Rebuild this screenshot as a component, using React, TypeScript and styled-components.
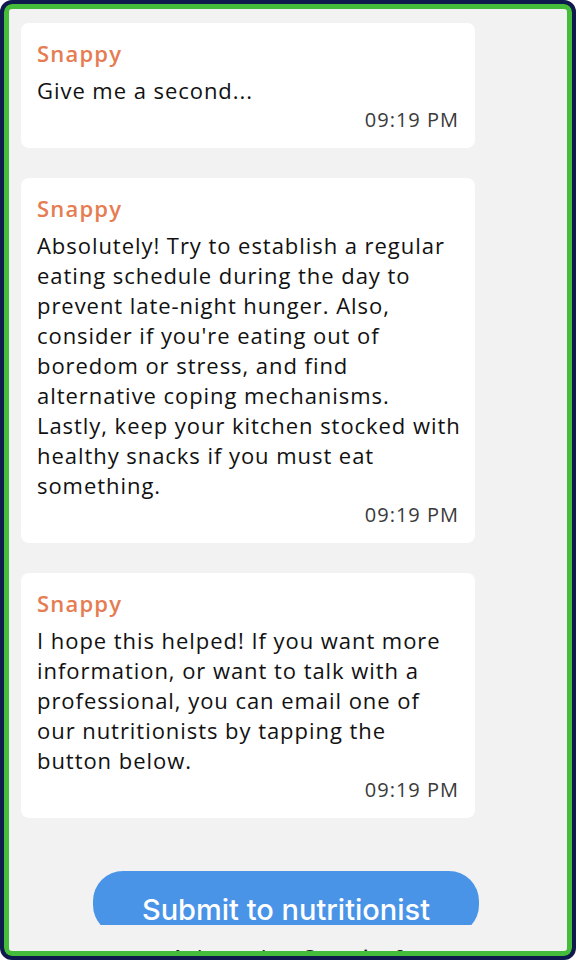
import React from 'react'
import styled, { createGlobalStyle } from 'styled-components'

const GlobalStyle = createGlobalStyle`
  html, body {
    margin: 0;
    padding: 0;
    background: #ffffff;
  }
  * {
    box-sizing: border-box;
  }
`

const Frame = styled.div`
  width: 576px;
  height: 960px;
  border: 4px solid #0f1b4c;
  border-radius: 12px;
  background: #0f1b4c;
  overflow: hidden;
`

const Screen = styled.div`
  height: 100%;
  border: 5px solid #44bd3a;
  border-radius: 8px;
  background: #f2f2f2;
  overflow: hidden;
  display: flex;
  flex-direction: column;
`

const ChatArea = styled.div`
  height: 916px;
  flex-shrink: 0;
  overflow: hidden;
  padding: 14px 12px 0;
  display: flex;
  flex-direction: column;
`

const MessageList = styled.div`
  display: flex;
  flex-direction: column;
  gap: 30px;
`

const Bubble = styled.div`
  width: 454px;
  background: #ffffff;
  border-radius: 8px;
  padding: 15px 16px 14px;
  font-family: 'Open Sans', 'Noto Sans', sans-serif;
`

const Sender = styled.div`
  color: #e57c52;
  font-size: 22px;
  font-weight: 600;
  letter-spacing: 1.2px;
  line-height: 30px;
  margin-bottom: 7px;
`

const Body = styled.div`
  color: #111111;
  font-size: 22px;
  letter-spacing: 0.95px;
  line-height: 30px;
  white-space: nowrap;
`

const Time = styled.div`
  color: #3a3a3a;
  font-size: 20px;
  letter-spacing: 1px;
  line-height: 29px;
  text-align: right;
`

const SubmitButton = styled.button`
  align-self: flex-start;
  flex-shrink: 0;
  width: 386px;
  height: 64px;
  margin: 53px 0 0 72px;
  border: none;
  border-radius: 30px;
  background: #4a94e8;
  color: #ffffff;
  font-family: 'Inter', 'Liberation Sans', sans-serif;
  font-size: 29px;
  font-weight: 500;
  padding: 12px 0 0;
  text-align: center;
`

const Footer = styled.div`
  padding-top: 18px;
  text-align: center;
  font-family: 'Inter', 'Liberation Sans', sans-serif;
  font-size: 22px;
  line-height: 30px;
  color: #222222;
`

const messages = [
  { lines: ['Give me a second...'], time: '09:19 PM' },
  {
    lines: [
      'Absolutely! Try to establish a regular',
      'eating schedule during the day to',
      'prevent late-night hunger. Also,',
      "consider if you're eating out of",
      'boredom or stress, and find',
      'alternative coping mechanisms.',
      'Lastly, keep your kitchen stocked with',
      'healthy snacks if you must eat',
      'something.',
    ],
    time: '09:19 PM',
  },
  {
    lines: [
      'I hope this helped! If you want more',
      'information, or want to talk with a',
      'professional, you can email one of',
      'our nutritionists by tapping the',
      'button below.',
    ],
    time: '09:19 PM',
  },
]

export default function App() {
  return (
    <>
      <GlobalStyle />
      <Frame>
        <Screen>
          <ChatArea>
            <MessageList>
              {messages.map((m, i) => (
                <Bubble key={i}>
                  <Sender>Snappy</Sender>
                  <Body>
                    {m.lines.map((line, j) => (
                      <React.Fragment key={j}>
                        {j > 0 && <br />}
                        {line}
                      </React.Fragment>
                    ))}
                  </Body>
                  <Time>{m.time}</Time>
                </Bubble>
              ))}
            </MessageList>
            <SubmitButton>Submit to nutritionist</SubmitButton>
          </ChatArea>
          <Footer>Ask another Question?</Footer>
        </Screen>
      </Frame>
    </>
  )
}
